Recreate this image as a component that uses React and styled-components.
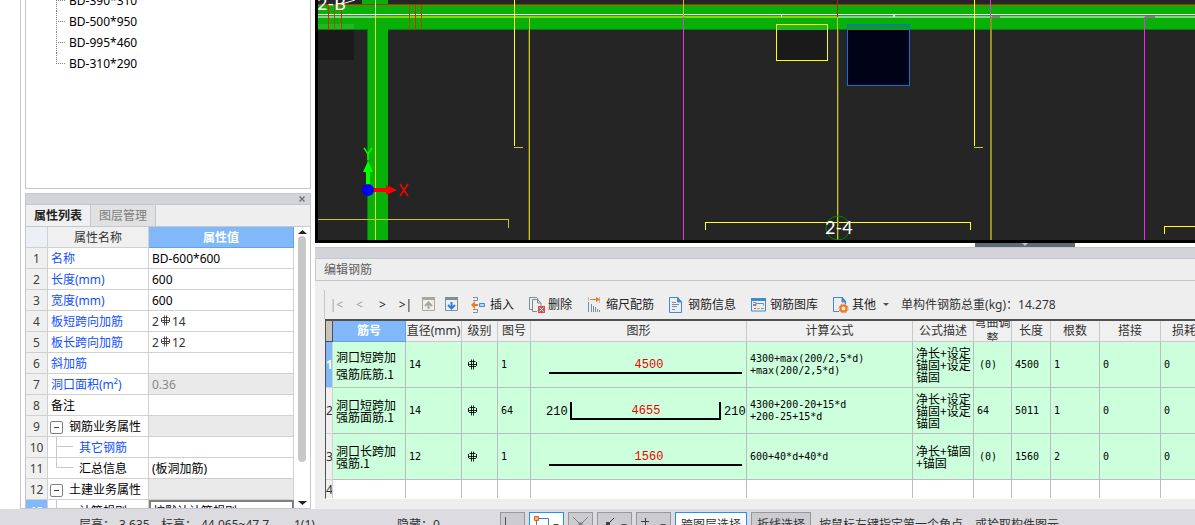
import styled, { createGlobalStyle, css } from 'styled-components';

const properties = [
  { name: '名称', value: 'BD-600*600', link: true },
  { name: '长度(mm)', value: '600', link: true },
  { name: '宽度(mm)', value: '600', link: true },
  { name: '板短跨向加筋', value: '14', count: '2', link: true },
  { name: '板长跨向加筋', value: '12', count: '2', link: true },
  { name: '斜加筋', value: '', link: true },
  { name: '洞口面积(m²)', value: '0.36', link: true, readOnly: true },
  { name: '备注', value: '' },
  { name: '钢筋业务属性', value: '', group: true, readOnly: true },
  { name: '其它钢筋', value: '', link: true, child: true },
  { name: '汇总信息', value: '(板洞加筋)', child: true, last: true },
  { name: '土建业务属性', value: '', group: true, readOnly: true },
  { name: '计算规则', value: '按默认计算规则', child: true, selected: true },
];

const columns = [
  { title: '筋号', width: 73, active: true },
  { title: '直径(mm)', width: 56 },
  { title: '级别', width: 36 },
  { title: '图号', width: 33 },
  { title: '图形', width: 216 },
  { title: '计算公式', width: 166 },
  { title: '公式描述', width: 61 },
  { title: '弯曲调整', width: 38 },
  { title: '长度', width: 39 },
  { title: '根数', width: 49 },
  { title: '搭接', width: 61 },
  { title: '损耗(%)', width: 64 },
];

const rebars = [
  {
    name: ['洞口短跨加', '强筋底筋.1'],
    diameter: 14,
    shape: 1,
    size: 4500,
    formula: ['4300+max(200/2,5*d)', '+max(200/2,5*d)'],
    note: ['净长+设定', '锚固+设定', '锚固'],
    bend: '(0)',
    length: 4500,
    count: 1,
    editing: true,
  },
  {
    name: ['洞口短跨加', '强筋面筋.1'],
    diameter: 14,
    shape: 64,
    size: 4655,
    hook: 210,
    formula: ['4300+200-20+15*d', '+200-25+15*d'],
    note: ['净长+设定', '锚固+设定', '锚固'],
    bend: '64',
    length: 5011,
    count: 1,
  },
  {
    name: ['洞口长跨加', '强筋.1'],
    diameter: 12,
    shape: 1,
    size: 1560,
    formula: ['600+40*d+40*d'],
    note: ['净长+锚固', '+锚固'],
    bend: '(0)',
    length: 1560,
    count: 2,
  },
];

const GradeMark = () => (
  <svg width='11' height='11' viewBox='0 0 11 11' fill='none' stroke='currentColor'>
    <path d='M4.5 .5v10M6.5 .5v10M2.5 2.5h6M1.5 3v4M9.5 3v4M2 7.5h7M1 5.5h9' strokeWidth='.85' />
  </svg>
);

const RebarShape = ({ size, hook }) => (
  <Sketch>
    {hook ? (
      <>
        <path d='M40 14v17h149V14' />
        <text x='15' y='27'>
          {hook}
        </text>
        <text x='193' y='27'>
          {hook}
        </text>
      </>
    ) : (
      <path d='M18 31h193' />
    )}
    <text className='size' x={hook ? 115 : 118} y='26'>
      {size}
    </text>
  </Sketch>
);

const Drawing = () => (
  <svg width='100%' height='100%'>
    <g shapeRendering='crispEdges'>
      <path fill='#08b008' d='M44 0h26v4H44zM0 4h2000v26H0zM50 30h20v2000H50z' />
      <path fill='#007f14' d='M0 29h50v1H0zM70 29h2000v1H70zM49 30h1v2000h-1z' />
      <path fill='#1a1a1a' d='M0 30h36v30H0z' />
      <path fill='#20b820' d='M0 24h36v5H0z' />
      <path fill='#c42400' d='M0 4h2000v1H0z' />
      <path fill='#fff' d='M0 14h2000v1H0z' />
      <path fill='#80d880' d='M0 16h57v2H0zM520 16h1480v2H520z' />
      <path fill='#80dc00' d='M57 16h463v2H57z' />
      <path stroke='#ff1400' d='M10.5 5v25M97.5 5v25' />
      <path stroke='#a05000' d='M16.5 5v25M91.5 5v25' />
      <path stroke='#d03000' d='M23.5 5v25M103.5 5v25' />
      <path stroke='#c0f0c0' d='M57.5 0v17' />
      <path stroke='#d8e800' d='M57.5 17v2000' />
      <path stroke='#ffff30' fill='none' d='M196.5 0v146M656.5 0v146M387.5 230v-8h265v8' />
      <path stroke='#c8c82c' fill='none' d='M196 147.5h9M656 147.5h9M0 219.5h190.5v8' />
      <path stroke='#c8c41c' d='M211.5 17v2000M519.5 17v2000M365.5 0v17' />
      <path stroke='#5c5a18' d='M210.5 30v2000M520.5 30v2000' />
      <path stroke='#909024' strokeWidth='2' d='M673 17v2000' />
      <path stroke='#e038e8' d='M365.5 17v2000M672.5 0v17' />
      <path stroke='#ff20ff' d='M826.5 17v2000' />
      <path stroke='#b41c10' d='M519.5 0v17' />
      <path stroke='#808080' strokeWidth='2' d='M674 17h8M827 17h10' />
      <path fill='#fff' d='M463 15h1v2h-1z' />
      <path fill='#c0f0c0' d='M575 15h2v2h-2z' />
      <path stroke='#ffff00' fill='none' d='M846.5 234v-8h1200' />
      <path fill='#1a1a1a' d='M459 30h50v30h-50z' />
      <path fill='#20b820' d='M459 25h50v5h-50z' />
      <path stroke='#ffff00' fill='none' d='M458.5 24.5h51v36h-51z' />
      <path fill='#000318' d='M530 30h61v56h-61z' />
      <path fill='#089c30' d='M530 25h61v5h-61z' />
      <path stroke='#1070dc' fill='none' d='M529.5 24.5h62v61h-62z' />
    </g>
    <circle cx='520' cy='228' r='12' fill='none' stroke='#008800' />
    <Label x='507' y='234'>
      2-4
    </Label>
    <Label x='-1' y='10'>
      2-B
    </Label>
    <path stroke='#fff' d='M24 4l13-4' />
    <path fill='#00ff00' d='M48 190v-18h-3l5-11 5 11h-3v18z' />
    <path fill='#ff0000' d='M50 188h18v-3l11 5-11 5v-3H50z' />
    <circle cx='50' cy='190' r='6' fill='#0000ff' />
    <path stroke='#00ff00' strokeWidth='1.5' fill='none' d='M46 148l4 6 4-6M50 154v6' />
    <path stroke='#ff0000' strokeWidth='1.5' d='M82 184l8 12M90 184l-8 12' />
  </svg>
);

const App = () => (
  <Window>
    <GlobalStyle />
    <Workspace>
      <Sidebar>
        <SideFrame>
          <Tree>
            <ul>
              {['BD-390*310', 'BD-500*950', 'BD-995*460', 'BD-310*290'].map((item) => (
                <li key={item}>{item}</li>
              ))}
            </ul>
          </Tree>
          <PropertyPanel>
            <PanelHandle>
              <button type='button' aria-label='关闭'>
                <svg width='6' height='6' stroke='#707070' strokeWidth='1.4'>
                  <path d='M.5.5l5 5M5.5.5l-5 5' />
                </svg>
              </button>
            </PanelHandle>
            <Tabs>
              <Tab type='button' $active>
                属性列表
              </Tab>
              <Tab type='button'>图层管理</Tab>
            </Tabs>
            <PropertyBody>
              <PropertyTable>
                <colgroup>
                  <col width='22' />
                  <col width='101' />
                  <col />
                </colgroup>
                <thead>
                  <tr>
                    <th />
                    <th>属性名称</th>
                    <th className='active'>属性值</th>
                  </tr>
                </thead>
                <tbody>
                  {properties.map((row, i) => (
                    <tr key={row.name}>
                      <RowNumber $selected={row.selected}>{i + 1}</RowNumber>
                      <PropertyName $link={row.link} $child={row.child} $group={row.group} $last={row.last}>
                        {row.group && <Collapse type='button' aria-label='折叠' />}
                        {row.name}
                      </PropertyName>
                      <PropertyValue $readOnly={row.readOnly} $selected={row.selected} $rebar={row.count}>
                        {row.count}
                        {row.count && <GradeMark />}
                        {row.value}
                      </PropertyValue>
                    </tr>
                  ))}
                </tbody>
              </PropertyTable>
              <ScrollBar>
                <svg width='9' height='4'>
                  <path d='M0 4l4.5-4L9 4z' />
                </svg>
                <div />
                <svg width='9' height='4'>
                  <path d='M0 0l4.5 4L9 0z' />
                </svg>
              </ScrollBar>
            </PropertyBody>
          </PropertyPanel>
        </SideFrame>
      </Sidebar>

      <Content>
        <Canvas>
          <Drawing />
        </Canvas>
        <Splitter>
          <button type='button' aria-label='收起'>
            <svg width='6' height='3'>
              <path d='M0 0h6L3 3z' fill='#c0c4c8' />
            </svg>
          </button>
        </Splitter>
        <RebarPanel>
          <PanelHandle />
          <PanelTitle>编辑钢筋</PanelTitle>
          <RebarBody>
            <Toolbar>
              <NavButton type='button' disabled>
                |&lt;
              </NavButton>
              <NavButton type='button' disabled>
                &lt;
              </NavButton>
              <NavButton type='button'>&gt;</NavButton>
              <NavButton type='button'>&gt;|</NavButton>
              <NavButton type='button' aria-label='上移' disabled>
                <svg width='13' height='15' fill='none' stroke='#aaa6a0'>
                  <path d='M.5 .5h12v13H.5z' />
                  <path d='M0 1.5h13' strokeWidth='3' />
                  <path d='M6.5 12V6M3 9l3.5-3.5L10 9' strokeWidth='2' />
                </svg>
              </NavButton>
              <NavButton type='button' aria-label='下移'>
                <svg width='13' height='15' fill='none' stroke='#7c909c'>
                  <path d='M.5 .5h12v13H.5z' />
                  <path d='M0 1.5h13' strokeWidth='3' />
                  <path d='M6.5 5v6M3 8l3.5 3.5L10 8' stroke='#3080d8' strokeWidth='2' />
                </svg>
              </NavButton>
              <Actions>
                <ToolButton type='button'>
                  <svg viewBox='0 0 16 16' fill='none' stroke='#7c909c'>
                    <path d='M2 .5h4.5v3H2M2 15.5h4.5v-3H2' />
                    <path d='M8.5 6.5h5v3h-5z' stroke='#4088d8' fill='#b8d8f8' />
                    <path d='M3 8h4' stroke='#f07820' strokeWidth='2' />
                    <path d='M0 8l4-4v8z' fill='#f07820' stroke='none' />
                  </svg>
                  插入
                </ToolButton>
                <ToolButton type='button'>
                  <svg viewBox='0 0 16 16' fill='none' stroke='#7c8c98'>
                    <path d='M3 12.5H.5V.5h7l2 2' />
                    <path d='M8 14.5H3.5v-12h5l3.500 3.5v3M8.500 2.500V6H12' />
                    <path d='M9 9h7v7H9z' fill='#e04848' stroke='none' />
                    <path d='M10.5 10.5l4 4M14.5 10.5l-4 4' stroke='#fff' />
                  </svg>
                  删除
                </ToolButton>
                <ToolButton type='button'>
                  <svg viewBox='0 0 16 16' fill='none' stroke='#7c8c98'>
                    <path d='M1.5 5v10M4.5 7v8M6.5 9v6M8.5 10v5M10.5 12v3M12.5 13v2' />
                    <path d='M1.5 .5v4M12.5 .5v5' strokeDasharray='1 1' />
                    <path d='M3 2.5h8' stroke='#f07820' />
                    <path d='M9 0l4 2.5L9 5z' fill='#f07820' stroke='none' />
                  </svg>
                  缩尺配筋
                </ToolButton>
                <ToolButton type='button'>
                  <svg viewBox='0 0 16 16' fill='none' stroke='#4088d8'>
                    <path d='M.5 .5h8l4 4v11H.5z' />
                    <path d='M8.5 0v5h4z' fill='#4088d8' />
                    <path d='M3 5.5h4M3 7.5h7M3 9.5h5M3 12.5h3' stroke='#7c8c98' />
                  </svg>
                  钢筋信息
                </ToolButton>
                <ToolButton type='button'>
                  <svg viewBox='0 0 16 16' fill='none' stroke='#4088d8'>
                    <path d='M.5 2v12h14V2' />
                    <path d='M0 2.5h15' strokeWidth='3' />
                    <path d='M2 5.5h3v3H2M5 6.5h7.5v2M2 7.5h3' stroke='#7c8c98' />
                    <path d='M3 11.5h2' stroke='#e04848' />
                    <path d='M6 11.5h3' stroke='#e0b020' />
                    <path d='M10 11.5h3' stroke='#60b850' />
                  </svg>
                  钢筋图库
                </ToolButton>
                <ToolButton type='button'>
                  <svg viewBox='0 0 16 16' fill='none' stroke='#4088d8'>
                    <path d='M6 14.5H.5V.5H9l3.5 4V7' />
                    <path d='M9 0v5h4z' fill='#4088d8' />
                    <circle cx='10.5' cy='11.500' r='3' stroke='#f07820' strokeWidth='2' />
                    <circle cx='10.5' cy='11.500' r='4.5' stroke='#f07820' strokeDasharray='2 1.5' />
                  </svg>
                  其他
                  <Caret />
                </ToolButton>
              </Actions>
              <Total>单构件钢筋总重(kg)：14.278</Total>
            </Toolbar>
            <TableView>
              <RebarTable>
                <colgroup>
                  <col width='7' />
                  {columns.map((col) => (
                    <col key={col.title} width={col.width} />
                  ))}
                </colgroup>
                <thead>
                  <tr>
                    <th className='corner' />
                    {columns.map((col) => (
                      <th key={col.title} className={col.active ? 'active' : undefined}>
                        <HeadText>{col.title}</HeadText>
                      </th>
                    ))}
                  </tr>
                </thead>
                <tbody>
                  {rebars.map((bar, i) => (
                    <tr key={i}>
                      <RebarNumber $selected={bar.editing}>{i + 1}</RebarNumber>
                      <RebarCell $loose={bar.editing}>
                        <Lines lines={bar.name} />
                      </RebarCell>
                      <RebarCell $numeric>{bar.diameter}</RebarCell>
                      <RebarCell $indent>
                        <GradeMark />
                      </RebarCell>
                      <RebarCell $numeric>{bar.shape}</RebarCell>
                      <RebarCell $drawing>
                        <RebarShape size={bar.size} hook={bar.hook} />
                      </RebarCell>
                      <RebarCell $numeric>
                        <Lines lines={bar.formula} />
                      </RebarCell>
                      <RebarCell>
                        <Lines lines={bar.note} />
                      </RebarCell>
                      <RebarCell $numeric $indent={bar.bend === '(0)'}>
                        {bar.bend}
                      </RebarCell>
                      <RebarCell $numeric>{bar.length}</RebarCell>
                      <RebarCell $numeric>{bar.count}</RebarCell>
                      <RebarCell $numeric>0</RebarCell>
                      <RebarCell $numeric>0</RebarCell>
                    </tr>
                  ))}
                  <tr className='empty'>
                    <RebarNumber>4</RebarNumber>
                    {columns.map((col) => (
                      <RebarCell key={col.title} $empty />
                    ))}
                  </tr>
                </tbody>
              </RebarTable>
            </TableView>
          </RebarBody>
        </RebarPanel>
      </Content>
    </Workspace>

    <StatusBar>
      <StatusInfo>
        <Readout $width={40}>层高：</Readout>
        <Readout $width={42}>3.635</Readout>
        <Readout $width={40}>标高：</Readout>
        <Readout $width={93}>44.065~47.7</Readout>
        <Readout $width={103}>1(1)</Readout>
        <Readout $width={103}>隐藏：0</Readout>
      </StatusInfo>
      <StatusButton type='button' aria-label='正交'>
        <svg width='15' height='16' stroke='#505050' fill='none'>
          <path d='M.5 0v15.5H15' />
        </svg>
      </StatusButton>
      <StatusButton type='button' aria-label='捕捉' $active $wide>
        <svg width='15' height='18' stroke='#3080d8' fill='none'>
          <path d='M2.5 2.5h12v15h-12z' />
          <path d='M.5 .5h4v4h-4z' stroke='#e06010' fill='#f8b080' />
        </svg>
        <Caret />
      </StatusButton>
      <StatusButton type='button' aria-label='交点'>
        <svg width='15' height='16' stroke='#808080' fill='none'>
          <path d='M0 0l15 15M15 0L0 15' />
          <path d='M6 6h3v3H6z' fill='#808080' />
        </svg>
      </StatusButton>
      <StatusButton type='button' aria-label='垂点' $wide>
        <svg width='15' height='16' stroke='#404040' fill='none'>
          <path d='M12 1L1 12' />
          <path d='M4 5h4v4H4z' fill='#404040' stroke='none' />
        </svg>
        <Caret />
      </StatusButton>
      <StatusButton type='button' aria-label='偏移' $wide>
        <svg width='15' height='16' stroke='#404040' fill='none'>
          <path d='M0 4.5h8M4.5 1v10M10 12.5h4' />
        </svg>
        <Caret />
      </StatusButton>
      <StatusButton type='button' $active $text>
        跨图层选择
      </StatusButton>
      <StatusButton type='button' $text>
        折线选择
      </StatusButton>
      <Hint>按鼠标左键指定第一个角点，或拾取构件图元</Hint>
    </StatusBar>
  </Window>
);

const Lines = ({ lines }) => lines.map((line, i) => <div key={i}>{line}</div>);

const GlobalStyle = createGlobalStyle`
  * {
    box-sizing: border-box;
  }
  body {
    margin: 0;
    background: white;
    color: #1a1a1a;
    font: 12px/16px 'Noto Sans', 'Noto Sans CJK SC', sans-serif;
  }
  button {
    font: inherit;
    color: inherit;
    padding: 0;
    border: 0;
    background: none;
  }
  svg {
    display: block;
    flex: none;
  }
`;

const Window = styled.div`
  height: 100vh;
  display: flex;
  flex-direction: column;
  overflow: hidden;
  white-space: nowrap;
`;

const Workspace = styled.div`
  flex: 1;
  min-height: 0;
  display: flex;
`;

const Sidebar = styled.aside`
  flex: none;
  width: 311px;
  margin-right: 4px;
  padding-left: 20px;
`;

const SideFrame = styled.div`
  height: 100%;
  display: flex;
  flex-direction: column;
  gap: 4px;
  padding-left: 4px;
  border-left: 1px solid #c4c7cf;
  border-bottom: 1px solid #c4c7cf;
`;

const Tree = styled.div`
  flex: 1;
  min-height: 0;
  overflow: hidden;
  border: 1px solid #c4c7cf;
  border-top: 0;
  ul {
    list-style: none;
    margin: -10px 0 0 30px;
    padding: 0;
  }
  li {
    height: 21px;
    line-height: 21px;
    display: flex;
    color: black;
  }
  li::before {
    content: '';
    width: 10px;
    margin-right: 3px;
    background: linear-gradient(90deg, #808080 50%, transparent 50%) 0 10px / 2px 1px repeat-x,
      linear-gradient(#808080 50%, transparent 50%) 0 0 / 1px 2px repeat-y;
  }
  li:last-child::before {
    height: 11px;
  }
`;

const PropertyPanel = styled.section`
  flex: 0 0 315px;
  display: flex;
  flex-direction: column;
  overflow: hidden;
  border: 1px solid #c4c7cf;
  border-bottom: 0;
`;

const PanelHandle = styled.div`
  flex: 0 0 10px;
  display: flex;
  align-items: center;
  justify-content: flex-end;
  padding-right: 5px;
  background: #d3d4d9;
`;

const Tabs = styled.div`
  flex: 0 0 23px;
  display: flex;
  background: #eee;
  border-top: 1px solid #c4c7cf;
  border-bottom: 1px solid #c4c7cf;
`;

const Tab = styled.button`
  width: 65px;
  border-right: 1px solid #c4c7cf;
  background: ${({ $active }) => ($active ? '#f0f0f0' : '#e1e1e1')};
  color: ${({ $active }) => ($active ? '#222' : '#7c7c7c')};
  font-weight: ${({ $active }) => ($active ? 700 : 400)};
`;

const PropertyBody = styled.div`
  flex: 1;
  min-height: 0;
  display: flex;
  align-items: stretch;
  overflow: hidden;
`;

const PropertyTable = styled.table`
  flex: 1;
  align-self: flex-start;
  table-layout: fixed;
  border-spacing: 0;
  th,
  td {
    height: 21px;
    line-height: 19px;
    padding: 1px 0 0;
    overflow: hidden;
    border-right: 1px solid #d0d0d0;
    border-bottom: 1px solid #d0d0d0;
  }
  th {
    background: #f0f0f0;
    color: #333;
    font-weight: 400;
  }
  th:first-child {
    background: #ecf0f6;
  }
  th.active {
    background: #80b8fa;
    border-color: #60a4e8;
    color: white;
    font-weight: 700;
  }
`;

const RowNumber = styled.td`
  text-align: center;
  background: ${({ $selected }) => ($selected ? '#80b8fa' : '#f0f0f0')};
  color: ${({ $selected }) => ($selected ? 'white' : '#404040')};
  font-weight: ${({ $selected }) => ($selected ? 700 : 400)};
`;

const PropertyName = styled.td`
  && {
    padding-left: ${({ $child, $group }) => ($child ? 31 : $group ? 2 : 3)}px;
  }
  color: ${({ $link }) => ($link ? '#1450ff' : 'black')};
  ${({ $child, $last }) =>
    $child &&
    css`
      background: linear-gradient(#c8c8c8, #c8c8c8) 8px 9px / 17px 1px no-repeat,
        linear-gradient(#c8c8c8, #c8c8c8) 8px 0 / 1px ${$last ? '10px' : '100%'} no-repeat;
    `}
`;

const Collapse = styled.button`
  width: 13px;
  height: 13px;
  margin-right: 6px;
  vertical-align: -2px;
  border: 1px solid #808080;
  border-radius: 2px;
  background: linear-gradient(#404040, #404040) center / 5px 1px no-repeat;
`;

const PropertyValue = styled.td`
  && {
    padding-left: 3px;
    ${({ $selected }) => $selected && 'border: 2px solid #808080; padding: 0 0 0 2px;'}
  }
  background: ${({ $readOnly }) => ($readOnly ? '#eaeaea' : 'white')};
  color: ${({ $readOnly, $rebar }) => ($readOnly ? '#888' : $rebar ? '#333' : 'black')};
  svg {
    display: inline-block;
    margin: 0 1px;
    vertical-align: 0;
  }
`;

const ScrollBar = styled.div`
  width: 16px;
  display: flex;
  flex-direction: column;
  align-items: center;
  padding: 3px 0;
  fill: #222;
  div {
    width: 8px;
    height: 226px;
    margin: 2px 0 auto;
    border-radius: 4px;
    background: #c8c8c8;
  }
`;

const Content = styled.main`
  flex: 1;
  min-width: 0;
  display: flex;
  flex-direction: column;
`;

const Canvas = styled.div`
  flex: 1;
  min-height: 0;
  overflow: hidden;
  background: #252525;
  border-left: 3px solid black;
  border-bottom: 3px solid black;
`;

const Label = styled.text`
  fill: white;
  font: 18px Lato, sans-serif;
`;

const Splitter = styled.div`
  flex: 0 0 4px;
  display: flex;
  button {
    width: 100px;
    margin-left: 75%;
    display: flex;
    justify-content: center;
    background: #616b76;
  }
`;

const RebarPanel = styled.section`
  flex: 0 0 262px;
  display: flex;
  flex-direction: column;
  overflow: hidden;
  background: #eee;
  border-top: 1px solid #c4c7cf;
`;

const PanelTitle = styled.div`
  flex: 0 0 23px;
  padding-left: 8px;
  line-height: 21px;
  color: #606060;
  border: 1px solid #c4c7cf;
  border-right: 0;
`;

const RebarBody = styled.div`
  flex: 1;
  min-height: 0;
  display: flex;
  flex-direction: column;
  padding: 9px 0 10px 9px;
`;

const Toolbar = styled.div`
  flex: 0 0 29px;
  display: flex;
  align-items: center;
  border-left: 1px solid #c4c7cf;
`;

const NavButton = styled.button`
  width: 23px;
  display: flex;
  justify-content: center;
  color: ${({ disabled }) => (disabled ? '#a0a0a0' : '#222')};
`;

const Actions = styled.div`
  display: flex;
  gap: 15px;
  margin-left: 8px;
`;

const ToolButton = styled.button`
  display: flex;
  align-items: center;
  gap: 3px;
  color: #222;
  svg {
    width: 16px;
    height: 16px;
  }
`;

const Caret = styled.i`
  width: 0;
  height: 0;
  margin-left: 4px;
  border: 3px solid transparent;
  border-top-color: #505050;
  border-bottom: 0;
`;

const Total = styled.span`
  margin-left: 12px;
  color: #333;
`;

const TableView = styled.div`
  flex: 1;
  min-height: 0;
  overflow: hidden;
  margin-left: 1px;
  border-top: 2px solid #505050;
  border-left: 1px solid #505050;
  border-bottom: 1px solid white;
`;

const RebarTable = styled.table`
  width: 899px;
  min-width: 100%;
  table-layout: fixed;
  border-spacing: 0;
  th {
    height: 21px;
    padding: 0;
    background: #f0f0f0;
    border-right: 1px solid #c8c8c8;
    border-bottom: 1px solid #c8c8c8;
    color: #333;
    font-weight: 400;
  }
  th.corner {
    background: #c8c4bc;
    border-color: #505050;
  }
  th.active {
    background: #80b8fa;
    border-color: #60a4e8;
    color: white;
    font-weight: 700;
  }
`;

const HeadText = styled.div`
  height: 20px;
  display: flex;
  align-items: center;
  justify-content: center;
  overflow: hidden;
  white-space: normal;
  word-break: break-all;
`;

const RebarNumber = styled.td`
  height: 46px;
  padding: 0;
  overflow: hidden;
  border-right: 1px solid #d0d0d0;
  border-bottom: 1px solid #d0d0d0;
  background: ${({ $selected }) => ($selected ? '#80b8fa' : '#f0f0f0')};
  color: ${({ $selected }) => ($selected ? 'white' : '#333')};
  font-weight: ${({ $selected }) => ($selected ? 700 : 400)};
  .empty & {
    height: 21px;
  }
`;

const RebarCell = styled.td`
  padding: 0 0 0 ${({ $drawing, $indent }) => ($drawing ? 0 : $indent ? 5 : 3)}px;
  overflow: hidden;
  background: ${({ $empty }) => ($empty ? 'white' : '#ccffdc')};
  border-right: 1px solid #bcbcbc;
  border-bottom: 1px solid #bcbcbc;
  color: black;
  font-family: 'Noto Sans CJK SC', sans-serif;
  line-height: ${({ $loose }) => ($loose ? 17 : 12)}px;
  ${({ $numeric }) => $numeric && "font-size: 10px; font-family: 'DejaVu Sans Mono', monospace;"}
`;

const Sketch = styled.svg`
  width: 100%;
  height: 45px;
  path {
    fill: none;
    stroke: black;
    stroke-width: 2px;
  }
  text {
    font: 12px 'Liberation Mono', monospace;
  }
  .size {
    fill: #f00000;
    text-anchor: middle;
  }
`;

const StatusBar = styled.footer`
  flex: 0 0 16px;
  display: flex;
  align-items: flex-start;
  gap: 4px;
  padding-top: 3px;
  overflow: hidden;
  background: #dcdce0;
  color: #333;
  line-height: 26px;
`;

const StatusInfo = styled.div`
  display: flex;
  padding-left: 79px;
  margin-right: -4px;
`;

const Readout = styled.span`
  width: ${({ $width }) => $width}px;
`;

const StatusButton = styled.button`
  width: ${({ $wide, $text }) => ($text ? 'auto' : $wide ? '35px' : '25px')};
  height: 26px;
  display: flex;
  align-items: center;
  padding: 0 ${({ $text }) => ($text ? 5 : 4)}px;
  border: 1px solid ${({ $active }) => ($active ? '#2090ff' : '#989898')};
  background: ${({ $active }) => ($active ? 'white' : '#ccccd0')};
`;

const Hint = styled.span`
  margin-left: 4px;
`;

export default App;
